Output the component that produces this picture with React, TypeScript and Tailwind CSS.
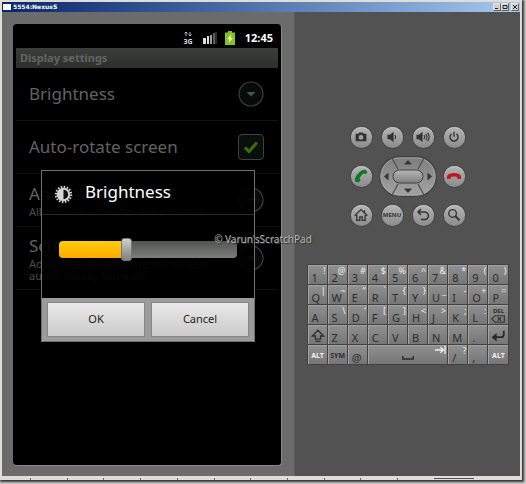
import type { ReactNode } from "react";

type Key = {
  main: ReactNode;
  alt?: ReactNode;
  label: string;
  span?: boolean;
  small?: boolean;
};

const k = (main: string, alt?: string): Key => ({ main, alt, label: main });

function ShiftIcon() {
  return (
    <svg viewBox="0 0 14 14" className="h-3.5 w-3.5 fill-none stroke-[#303030]" strokeWidth="1.3">
      <path d="M7 1.2 12.6 7H9.6v3.2H4.4V7H1.4Z M4.4 12.4h5.2" />
    </svg>
  );
}

function DeleteIcon() {
  return (
    <span className="flex flex-col items-center">
      <span className="text-[6px] leading-[7px] font-bold">DEL</span>
      <svg viewBox="0 0 14 8" className="h-2 w-3.5 fill-none stroke-[#303030]" strokeWidth="1.1">
        <path d="M4 .7h9.3v6.6H4L.8 4Z M6.6 2.2l3.6 3.6 M10.2 2.2 6.6 5.8" />
      </svg>
    </span>
  );
}

function EnterIcon() {
  return (
    <svg viewBox="0 0 14 12" className="h-3 w-3.5 fill-none stroke-[#2a2a2a]" strokeWidth="1.8">
      <path d="M12.8.8v3.4q0 3-2.6 3H3" />
      <path d="M5.6 3 .6 7.2l5 4.2Z" className="fill-[#2a2a2a] stroke-none" />
    </svg>
  );
}

function SpaceIcon() {
  return (
    <svg viewBox="0 0 12 4" className="h-1 w-3 fill-none stroke-[#2a2a2a]" strokeWidth="1.4">
      <path d="M.8 0v3h10.4V0" />
    </svg>
  );
}

function TabIcon() {
  return (
    <svg viewBox="0 0 11 8" className="h-2 w-[11px] fill-none stroke-[#f0f0f0]" strokeWidth="1.3">
      <path d="M0 4h8.4 M5.4 1.2 8.4 4 5.4 6.8 M10 0v8" />
    </svg>
  );
}

const rows: Key[][] = [
  [k("1", "!"), k("2", "@"), k("3", "#"), k("4", "$"), k("5", "%"), k("6", "^"), k("7", "&"), k("8", "*"), k("9", "("), k("0", ")")],
  [k("Q", "|"), k("W", "~"), k("E", "“"), k("R", "`"), k("T", "{"), k("Y", "}"), k("U", "_"), k("I", "-"), k("O", "+"), k("P", "=")],
  [k("A"), k("S", "\\"), k("D", "‘"), k("F", "["), k("G", "]"), k("H", "<"), k("J", ">"), k("K", ";"), k("L", ":"), { main: <DeleteIcon />, label: "Delete", small: true }],
  [{ main: <ShiftIcon />, label: "Shift", small: true }, k("Z"), k("X"), k("C"), k("V"), k("B"), k("N"), k("M"), k("."), { main: <EnterIcon />, label: "Enter", small: true }],
  [
    { main: <span className="text-[7px] font-bold text-[#f0f0f0]">ALT</span>, label: "Left Alt", small: true },
    { main: <span className="text-[7px] font-bold">SYM</span>, label: "Sym", small: true },
    k("@"),
    { main: <SpaceIcon />, alt: <TabIcon />, label: "Space", span: true },
    k("/", "?"),
    k(","),
    { main: <span className="text-[7px] font-bold text-[#f0f0f0]">ALT</span>, label: "Right Alt", small: true },
  ],
];

function KeyCap({ main, alt, label, span, small }: Key) {
  return (
    <button
      aria-label={label}
      className={`relative flex border-t border-l border-[#a3a3a3] bg-linear-to-b from-[#8f8f8f] to-[#767676] text-[11px] leading-3 text-[#2c2c2c] ${span ? "col-span-4 items-end justify-center pb-1" : small ? "items-center justify-center pt-0.5" : "items-end justify-start pl-[3px]"}`}
    >
      {main}
      {alt && <span className="absolute top-0 right-px text-[9px] leading-[10px] text-[#ececec]">{alt}</span>}
    </button>
  );
}

function RoundButton({ label, children }: { label: string; children: ReactNode }) {
  return (
    <button
      aria-label={label}
      className="flex size-[21px] items-center justify-center self-center rounded-full bg-linear-to-b from-[#b4b4b4] to-[#8c8c8c] text-[#333333] shadow-[0_0_0_1px_#474747,inset_0_1px_0_#c4c4c4]"
    >
      {children}
    </button>
  );
}

function Controls() {
  const icon = "size-4 fill-none stroke-current";
  return (
    <div className="grid grid-cols-[repeat(4,21px)] grid-rows-[21px_41px_21px] gap-x-2.5 gap-y-2">
      <RoundButton label="Camera">
        <svg viewBox="0 0 16 16" className="size-4 fill-current">
          <path fillRule="evenodd" d="M2.6 4.8h2.6l1-1.4h3.6l1 1.4h2.6v7.4H2.6ZM8 6a2.4 2.4 0 1 0 0 4.8A2.4 2.4 0 0 0 8 6Z" />
        </svg>
      </RoundButton>
      <RoundButton label="Volume down">
        <svg viewBox="0 0 16 16" className={icon} strokeWidth="1.2">
          <path d="M4 6.4h2L9 4v8L6 9.6H4Z" className="fill-current" />
          <path d="M11 6q1.4 2 0 4" />
        </svg>
      </RoundButton>
      <RoundButton label="Volume up">
        <svg viewBox="0 0 16 16" className={icon} strokeWidth="1.1">
          <path d="M2 6.4h2L7 4v8L4 9.6H2Z" className="fill-current" />
          <path d="M9 6q1.4 2 0 4 M10.8 4.8q2.4 3.2 0 6.4 M12.6 3.6q3.2 4.4 0 8.8" />
        </svg>
      </RoundButton>
      <RoundButton label="Power">
        <svg viewBox="0 0 16 16" className={icon} strokeWidth="1.4">
          <path d="M8 2.8v5 M5.6 4.8a4 4 0 1 0 4.8 0" />
        </svg>
      </RoundButton>

      <RoundButton label="Call">
        <svg viewBox="0 0 16 16" className="size-4">
          <path fill="#0a7a2a" d="M12.2 1.6 14.4 4q-.2 1.4-1.6 2.2L11 5.2Q7.6 7 6.4 10.4l1.2 1.4q-.8 2-2.4 2.8L2 13.6Q1.4 9.6 4.6 6 8 2 12.2 1.6Z" />
        </svg>
      </RoundButton>
      <div className="col-span-2 -mx-[3px]">
        <svg viewBox="0 0 58 41" className="h-[41px] w-full" role="img" aria-label="Directional pad">
          <defs>
            <linearGradient id="pad" x1="0" y1="0" x2="0" y2="1">
              <stop offset="0" stopColor="#7d7d7d" />
              <stop offset="1" stopColor="#a4a4a4" />
            </linearGradient>
            <linearGradient id="center" x1="0" y1="0" x2="0" y2="1">
              <stop offset="0" stopColor="#b6b6b6" />
              <stop offset="1" stopColor="#808080" />
            </linearGradient>
          </defs>
          <rect x=".7" y=".7" width="56.6" height="39.6" rx="19.8" fill="url(#pad)" stroke="#404040" strokeWidth="1.2" />
          <rect x="2" y="2" width="54" height="37" rx="18.5" fill="none" stroke="#aaaaaa" strokeWidth=".8" />
          <path d="M13 2l6 11 M45 2l-6 11 M13 39l6-11 M45 39l-6-11" stroke="#484848" strokeWidth="1.1" />
          <rect x="14" y="14" width="30" height="13" rx="6.5" fill="url(#center)" stroke="#424242" />
          <path fill="#363636" d="M29 4l4 4.5h-8Z M29 37l4-4.5h-8Z M5 20.5l4.5-4v8Z M53 20.5l-4.5-4v8Z" />
        </svg>
      </div>
      <RoundButton label="End call">
        <svg viewBox="0 0 16 16" className="size-4">
          <path fill="#c4141c" d="M.8 9.4Q1 6.6 3.6 5.8q4.4-1.4 8.8 0 2.6.8 2.8 3.6l-.4 1.6-3.4-.2-.6-2Q8 8.2 5.2 8.8l-.6 2-3.4.2Z" />
        </svg>
      </RoundButton>

      <RoundButton label="Home">
        <svg viewBox="0 0 16 16" className={icon} strokeWidth="1.3">
          <path d="M1.6 8.8 8 2.6l6.4 6.2 M3.8 8v5.4h3V9.8h2.4v3.6h3V8 M11.6 5.6V3.2" />
        </svg>
      </RoundButton>
      <RoundButton label="Menu">
        <span className="text-[6px] font-bold">MENU</span>
      </RoundButton>
      <RoundButton label="Back">
        <svg viewBox="0 0 16 16" className={icon} strokeWidth="1.5">
          <path d="M6 2 3 5l3 3 M3 5h6.6a3.8 3.8 0 0 1 0 7.6H6" />
        </svg>
      </RoundButton>
      <RoundButton label="Search">
        <svg viewBox="0 0 16 16" className={icon} strokeWidth="1.4">
          <circle cx="6.6" cy="6.4" r="3.8" />
          <path d="M9.4 9.2 13.6 13.4" strokeWidth="2" />
        </svg>
      </RoundButton>
    </div>
  );
}

function ArrowBadge() {
  return (
    <svg viewBox="0 0 26 26" className="size-[26px] shrink-0">
      <circle cx="13" cy="13" r="12" fill="#060a08" stroke="#3d3d3d" strokeWidth="1.2" />
      <path d="M8.5 11h9L13 15.5Z" fill="#4f534f" />
    </svg>
  );
}

function Setting({ title, children, control, tall }: { title: string; children?: ReactNode; control: ReactNode; tall?: boolean }) {
  return (
    <li className={`flex items-center justify-between border-b border-[#121212] pr-3.5 pl-[13px] ${tall ? "min-h-[63px]" : "min-h-[53px]"}`}>
      <div>
        <div className="text-[17px] leading-6 text-[#636363]">{title}</div>
        {children && <p className="w-[190px] text-[11px] leading-3 text-[#4c4c4c]">{children}</p>}
      </div>
      {control}
    </li>
  );
}

function Phone() {
  return (
    <section className="relative flex w-[269px] flex-1 flex-col rounded-sm border-r border-b border-[#8a8a8a] bg-black">
      <div className="flex h-6 items-center justify-end pt-1 pr-2">
        <svg viewBox="0 0 10 14" className="mr-2.5 h-3.5 w-2.5" role="img" aria-label="3G">
          <path d="M3 1v4 M1.5 2.5 3 1l1.5 1.5 M7 1v4 M5.5 3.5 7 5l1.5-1.5" fill="none" stroke="#b8b8b8" />
          <text x="5" y="13" textAnchor="middle" className="fill-[#dddddd] text-[7px] font-bold">3G</text>
        </svg>
        <svg viewBox="0 0 14 12" className="mr-2 h-3 w-3.5" role="img" aria-label="Signal strength">
          <path d="M0 6h3v6H0ZM4 4h2v8H4Z" fill="#dedede" />
          <path d="M7 3h2v9H7Z" fill="#a0a0a0" />
          <path d="M10 1h2v11h-2ZM12.5 0h1v12h-1Z" fill="#5a5a5a" />
        </svg>
        <svg viewBox="0 0 10 14" className="mr-2.5 h-3.5 w-2.5" role="img" aria-label="Battery charging">
          <path d="M3 0h4v1.4h3V14H0V1.4h3Z" fill="#86c41c" />
          <path d="M6.4 3.2 2.4 8h2.2l-1 3.8L7.8 7H5.6Z" fill="#ffffff" />
        </svg>
        <time className="text-[11px] leading-4 font-bold text-white">12:45</time>
      </div>
      <h1 className="mx-[3px] bg-linear-to-b from-[#3c3e3c] to-[#2d2f2d] px-1 text-[11px] leading-5 font-bold text-[#636562]">
        Display settings
      </h1>
      <ul className="mx-[3px]">
        <Setting title="Brightness" control={<ArrowBadge />} />
        <Setting
          title="Auto-rotate screen"
          control={
            <label className="relative flex size-[26px] items-center justify-center">
              <input
                type="checkbox"
                defaultChecked
                aria-label="Auto-rotate screen"
                className="peer absolute inset-0 appearance-none rounded-sm border border-[#3f413f] bg-[#0b0f0c]"
              />
              <svg viewBox="0 0 16 14" className="relative hidden h-3.5 w-4 peer-checked:block">
                <path d="M2 7.5 6 11.5 14 2.5" fill="none" stroke="#3d6c0c" strokeWidth="3" />
              </svg>
            </label>
          }
        />
        <Setting title="Animation" control={<ArrowBadge />}>All window animations are shown</Setting>
        <Setting title="Screen timeout" tall control={<ArrowBadge />}>
          Adjust the delay before the screen automatically turns off
        </Setting>
      </ul>

      <div className="absolute inset-x-0 top-[22px] bottom-0 flex items-center justify-center pl-0.5">
        <div role="dialog" aria-label="Brightness" className="w-[214px] border border-[#707070] bg-black/90">
          <header className="flex h-11 items-center gap-3 border-b border-[#2a2a2a] pl-3">
            <svg viewBox="0 0 20 20" className="mt-1 size-[19px]">
              <circle cx="10" cy="10" r="8" fill="none" stroke="#d0d0d0" strokeWidth="2.4" strokeDasharray="1.6 1.54" />
              <circle cx="10" cy="10" r="7" fill="#d4d4d4" />
              <path d="M10 5a5 5 0 0 1 0 10Z" fill="#101010" />
            </svg>
            <h2 className="text-[17px] leading-5 text-white">Brightness</h2>
          </header>
          <div className="flex h-[83px] items-start px-[17px] pt-[23px]">
            <input
              type="range"
              defaultValue={37}
              aria-label="Brightness level"
              className="h-[23px] w-full appearance-none bg-transparent [&::-webkit-slider-runnable-track]:h-[17px] [&::-webkit-slider-runnable-track]:rounded-[4px] [&::-webkit-slider-runnable-track]:[background:linear-gradient(#ffce0a,#ffaa00)_0_0/37%_100%_no-repeat,linear-gradient(#525452,#7c7e7c)] [&::-webkit-slider-thumb]:-mt-[3px] [&::-webkit-slider-thumb]:h-[23px] [&::-webkit-slider-thumb]:w-[11px] [&::-webkit-slider-thumb]:appearance-none [&::-webkit-slider-thumb]:rounded-[3px] [&::-webkit-slider-thumb]:border [&::-webkit-slider-thumb]:border-[#777777] [&::-webkit-slider-thumb]:bg-linear-to-b [&::-webkit-slider-thumb]:from-[#d0d0d0] [&::-webkit-slider-thumb]:to-[#808080]"
            />
          </div>
          <footer className="grid grid-cols-2 gap-1.5 bg-[#9b9b9b] px-[5px] py-1 text-[11px] text-[#1c1c1c]">
            <button className="h-[35px] border border-[#868686] bg-linear-to-b from-[#e9e9e9] to-[#cacaca]">OK</button>
            <button className="h-[35px] border border-[#868686] bg-linear-to-b from-[#e9e9e9] to-[#cacaca]">Cancel</button>
          </footer>
        </div>
      </div>
    </section>
  );
}

function TitleButton({ label, d }: { label: string; d: string }) {
  return (
    <button aria-label={label} className="size-2 border border-[#e8e6e0] border-r-[#606060] border-b-[#606060] bg-[#d4d0c8]">
      <svg viewBox="0 0 6 6" className="size-1.5 fill-none stroke-[#222222]">
        <path d={d} />
      </svg>
    </button>
  );
}

export default function App() {
  return (
    <main className="relative flex h-screen min-h-[484px] flex-col bg-[#cfcfcf] pr-1 pb-1 font-['Noto_Sans',sans-serif]">
      <div className="flex flex-1 flex-col bg-[#e0ddd6] pt-0.5 pl-0.5 shadow-[1px_1px_2px_1px_#333333]">
        <header className="mr-0.5 flex h-2.5 items-center bg-linear-to-r from-[#0a246a] to-[#a6caf0] px-px">
          <span className="mr-0.5 h-1.5 w-2 bg-white" />
          <span className="flex-1 font-['DejaVu_Sans',sans-serif] text-[6px] leading-[10px] font-bold text-white">5554:NexusS</span>
          <TitleButton label="Minimize" d="M1 4.5h3" />
          <TitleButton label="Maximize" d="M1 1.5h4v3H1Z" />
          <span className="w-0.5" />
          <TitleButton label="Close" d="M1 1l4 4M5 1 1 5" />
        </header>
        <div className="mr-0.5 flex flex-1 bg-[#525252]">
          <div className="flex flex-col border-r border-[#5c5c5c] bg-[#6b6b6b] pt-3 pr-3 pb-2.5 pl-[11px]">
            <Phone />
          </div>
          <div className="flex flex-1 flex-col items-center justify-center gap-[38px] pt-[3px]">
            <Controls />
            <div className="grid w-[202px] auto-rows-[19px] grid-cols-10 gap-px bg-[#424242] p-px">
              {rows.flat().map((key) => (
                <KeyCap key={key.label + String(key.alt)} {...key} />
              ))}
            </div>
          </div>
        </div>
        <div className="flex h-1 items-end justify-between pr-12 pl-7">
          {Array.from({ length: 11 }, (_, i) => (
            <span key={i} className="h-0.5 w-px bg-[#666666]" />
          ))}
          <span className="h-0.5 w-10 border-t border-[#555555]" />
        </div>
      </div>
      <p className="pointer-events-none absolute inset-x-0 top-[232px] text-center text-[10px] leading-[14px] text-[#b4b4b4] [text-shadow:1px_1px_0_#333333]">
        © Varun'sScratchPad
      </p>
    </main>
  );
}
